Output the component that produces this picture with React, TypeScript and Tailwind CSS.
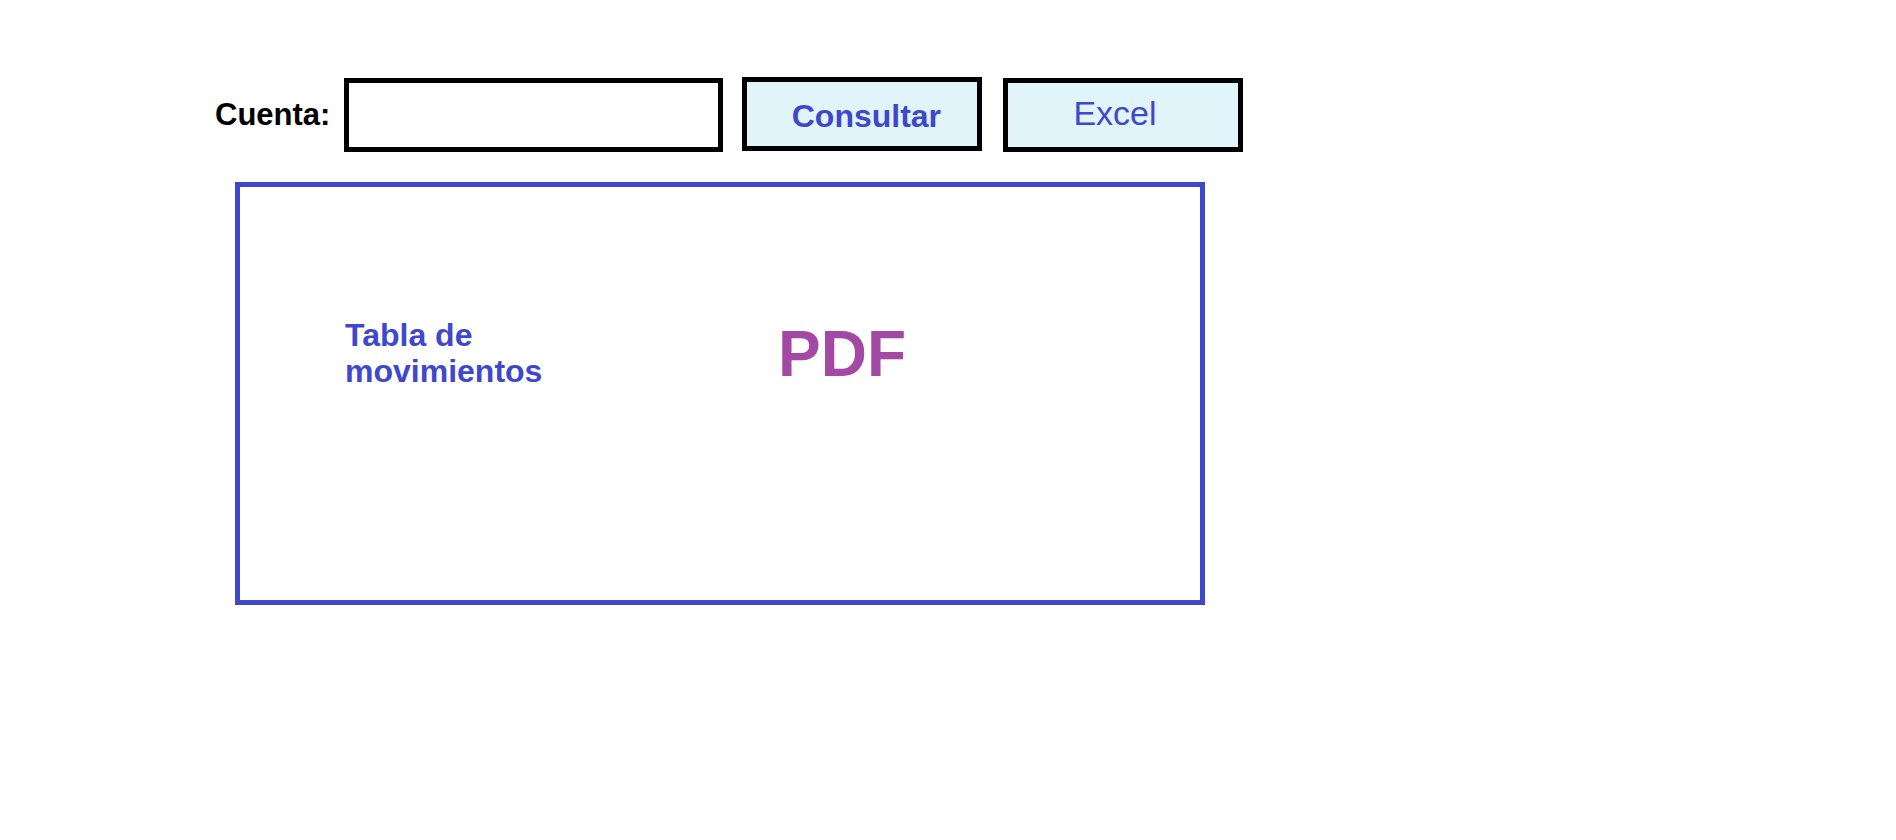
import React from "react";

export default function App() {
  return (
    <div className="w-[1896px] h-[840px] bg-white font-['Liberation_Sans',Arial,sans-serif]">
      <div className="flex items-start pt-[77px] pl-[215px]">
        <span className="mt-[22px] text-[31px] leading-none font-bold text-black">Cuenta:</span>
        <div className="ml-[14px] mt-[1px] w-[379px] h-[74px] border-[5px] border-black bg-white"></div>
        <button className="ml-[19px] w-[240px] h-[74px] border-[5px] border-black bg-[#e0f4fa] flex items-center justify-center pt-[4px] pl-[8px]">
          <span className="text-[32px] leading-none font-bold text-[#3f48cc]">Consultar</span>
        </button>
        <button className="ml-[21px] mt-[1px] w-[240px] h-[74px] border-[5px] border-black bg-[#e0f4fa] flex items-start justify-start pt-[13px] pl-[65px]">
          <span className="text-[34px] leading-none text-[#3f48cc]">Excel</span>
        </button>
      </div>
      <div className="ml-[235px] mt-[30px] w-[970px] h-[423px] border-[5px] border-[#3f48cc] flex items-start pl-[105px]">
        <div className="mt-[130px] w-[210px] text-[32px] leading-[36px] font-bold text-[#3f48cc]">Tabla de movimientos</div>
        <div className="mt-[135px] ml-[223px] text-[64px] leading-none font-bold text-[#a349a4]">PDF</div>
      </div>
    </div>
  );
}
